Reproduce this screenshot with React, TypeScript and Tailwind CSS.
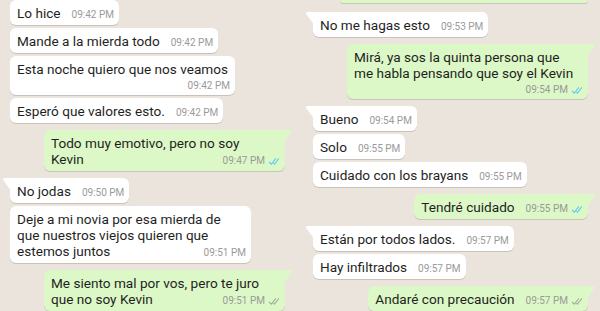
import clsx from "clsx";

type Msg = {
  lines: string[];
  time: string;
  out?: boolean;
  tail?: boolean;
  read?: boolean;
  timeBelow?: boolean;
  first?: boolean;
  wide?: boolean;
};

const left: Msg[] = [
  { lines: ["Lo hice"], time: "09:42 PM", first: true },
  { lines: ["Mande a la mierda todo"], time: "09:42 PM" },
  { lines: ["Esta noche quiero que nos veamos"], time: "09:42 PM", timeBelow: true },
  { lines: ["Esperó que valores esto."], time: "09:42 PM" },
  { lines: ["Todo muy emotivo, pero no soy", "Kevin"], time: "09:47 PM", out: true, tail: true, read: true, wide: true },
  { lines: ["No jodas"], time: "09:50 PM", tail: true },
  { lines: ["Deje a mi novia por esa mierda de", "que nuestros viejos quieren que", "estemos juntos"], time: "09:51 PM", wide: true },
  { lines: ["Me siento mal por vos, pero te juro", "que no soy Kevin"], time: "09:51 PM", out: true, tail: true, wide: true },
];

const right: Msg[] = [
  { lines: ["No me hagas esto"], time: "09:53 PM", tail: true },
  { lines: ["Mirá, ya sos la quinta persona que", "me habla pensando que soy el Kevin"], time: "09:54 PM", out: true, tail: true, read: true, timeBelow: true, wide: true },
  { lines: ["Bueno"], time: "09:54 PM", tail: true },
  { lines: ["Solo"], time: "09:55 PM" },
  { lines: ["Cuidado con los brayans"], time: "09:55 PM" },
  { lines: ["Tendré cuidado"], time: "09:55 PM", out: true, tail: true, read: true },
  { lines: ["Están por todos lados."], time: "09:57 PM", tail: true },
  { lines: ["Hay infiltrados"], time: "09:57 PM" },
  { lines: ["Andaré con precaución"], time: "09:57 PM", out: true, tail: true },
];

const Ticks = ({ read }: { read?: boolean }) => (
  <svg viewBox="0 0 16 15" className="h-[11px] w-[12px]" fill={read ? "#4fc3f7" : "#9aa595"}>
    <path d="M15.01 3.316l-.478-.372a.365.365 0 0 0-.51.063L8.666 9.879a.32.32 0 0 1-.484.033l-.358-.325a.319.319 0 0 0-.484.032l-.378.483a.418.418 0 0 0 .036.541l1.32 1.266c.143.14.361.125.484-.033l6.272-8.048a.366.366 0 0 0-.064-.512zm-4.1 0l-.478-.372a.365.365 0 0 0-.51.063L4.566 9.879a.32.32 0 0 1-.484.033L1.891 7.769a.366.366 0 0 0-.515.006l-.423.433a.364.364 0 0 0 .006.514l3.258 3.185c.143.14.361.125.484-.033l6.272-8.048a.365.365 0 0 0-.063-.51z" />
  </svg>
);

const Meta = ({ m }: { m: Msg }) => (
  <span className="flex translate-y-[2px] items-center gap-[3px] whitespace-nowrap text-[10px] leading-[12px] text-[#9a9a9a]">
    {m.time}
    {m.out && <Ticks read={m.read} />}
  </span>
);

const Bubble = ({ m }: { m: Msg }) => {
  const last = m.lines[m.lines.length - 1];
  return (
    <div
      className={clsx(
        "relative rounded-[6px] pb-1 pl-[7px] pr-[5px] pt-[5px] text-[13.6px] leading-4 text-[#1f1f1f] shadow-[0_1px_0.5px_rgba(0,0,0,0.15)]",
        m.wide ? "w-[241px]" : "w-fit",
        m.out ? "self-end bg-[#dcf8c6]" : "bg-white",
        m.tail && (m.out ? "rounded-tr-none" : "rounded-tl-none"),
        m.first ? "mt-0" : m.tail ? "mt-[7px]" : "mt-[3px]"
      )}
    >
      {m.tail && (
        <svg
          viewBox="0 0 8 13"
          className={clsx("absolute top-0 h-[13px] w-[8px]", m.out ? "-right-[8px]" : "-left-[8px]")}
          fill={m.out ? "#dcf8c6" : "#ffffff"}
        >
          {m.out ? (
            <path d="M5.188 0H0v11.193l6.467-8.625C7.526 1.156 6.958 0 5.188 0z" />
          ) : (
            <path d="M1.533 2.568L8 11.193V0H2.812C1.042 0 .474 1.156 1.533 2.568z" />
          )}
        </svg>
      )}
      {m.lines.slice(0, -1).map((l) => (
        <div key={l} className="h-4 whitespace-nowrap pr-[2px]">{l}</div>
      ))}
      {m.timeBelow ? (
        <>
          <div className="h-4 whitespace-nowrap pr-[2px]">{last}</div>
          <div className="flex h-[14px] justify-end">
            <Meta m={m} />
          </div>
        </>
      ) : (
        <div className="flex h-4 items-center justify-between gap-x-[11px]">
          <span className="whitespace-nowrap">{last}</span>
          <Meta m={m} />
        </div>
      )}
    </div>
  );
};

export default function App() {
  return (
    <div
      className="grid h-[311px] w-[600px] grid-cols-2 overflow-hidden bg-[#ebe4dc]"
      style={{ fontFamily: "Roboto, 'Noto Sans', sans-serif" }}
    >
      {/* Left screenshot */}
      <div className="flex flex-col pl-[10px] pr-[15px]">
        {left.map((m, i) => (
          <Bubble key={i} m={m} />
        ))}
      </div>

      {/* Right screenshot */}
      <div className="flex flex-col pl-[13px] pr-[12px]">
        <div className="ml-[27px] h-[3px] rounded-b-[6px] bg-[#dcf8c6] shadow-[0_1px_0.5px_rgba(0,0,0,0.15)]" />
        <div className="h-[2px]" />
        {right.map((m, i) => (
          <Bubble key={i} m={m} />
        ))}
      </div>
    </div>
  );
}
